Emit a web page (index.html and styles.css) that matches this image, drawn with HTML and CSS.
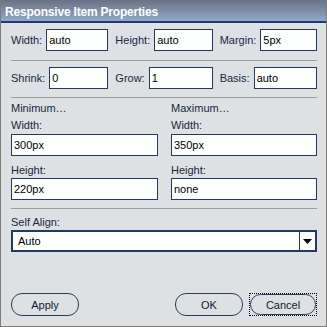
FILE: index.html
```html
<!DOCTYPE html>
<html lang="en">
<head>
    <meta charset="UTF-8">
    <title>Responsive Item Properties</title>
    <link rel="stylesheet" href="styles.css">
</head>
<body>
    <div class="dialog">
        <div class="dialog-title">Responsive Item Properties</div>

        <div class="dialog-body">
            <div class="field-row">
                <label class="field">Width: <input type="text" class="text-input" value="auto"></label>
                <label class="field">Height: <input type="text" class="text-input" value="auto"></label>
                <label class="field">Margin: <input type="text" class="text-input" value="5px"></label>
            </div>

            <div class="separator sep-box"></div>

            <div class="field-row">
                <label class="field">Shrink: <input type="text" class="text-input" value="0"></label>
                <label class="field">Grow: <input type="text" class="text-input" value="1"></label>
                <label class="field">Basis: <input type="text" class="text-input" value="auto"></label>
            </div>

            <div class="separator sep-flex"></div>

            <div class="limits">
                <div class="limit-col">
                    <div class="limit-heading">Minimum…</div>
                    <div class="stack-label">Width:</div>
                    <input type="text" class="text-input wide" value="300px">
                    <div class="stack-label second">Height:</div>
                    <input type="text" class="text-input wide tight" value="220px">
                </div>
                <div class="limit-col">
                    <div class="limit-heading">Maximum…</div>
                    <div class="stack-label">Width:</div>
                    <input type="text" class="text-input wide" value="350px">
                    <div class="stack-label second">Height:</div>
                    <input type="text" class="text-input wide tight" value="none">
                </div>
            </div>

            <div class="separator sep-limits"></div>

            <div class="stack-label align-label">Self Align:</div>
            <div class="select-box">
                <span class="select-value">Auto</span>
                <span class="select-arrow">
                    <svg width="9" height="5" viewBox="0 0 9 5"><polygon points="0,0 9,0 4.5,5" fill="#000"/></svg>
                </span>
            </div>

            <div class="button-bar">
                <button class="btn">Apply</button>
                <div class="button-group">
                    <button class="btn">OK</button>
                    <span class="focus-ring"><button class="btn inner">Cancel</button></span>
                </div>
            </div>
        </div>
    </div>
</body>
</html>
```

FILE: styles.css
```css
* {
    margin: 0;
    padding: 0;
    box-sizing: border-box;
    font-family: 'Liberation Sans', Arial, sans-serif;
}

body {
    background-color: #dde1e4;
}

.dialog {
    width: 327px;
    height: 327px;
    border: 1px solid #7c7c7c;
    border-top: none;
    background-color: #dde1e4;
    display: flex;
    flex-direction: column;
}

.dialog-title {
    height: 23px;
    padding: 5px 0 0 4px;
    background: linear-gradient(to bottom, #6a7282, #8faaca);
    border-bottom: 2px solid #1d3a6a;
    color: #fff;
    font-size: 12px;
    font-weight: bold;
    line-height: 14px;
    letter-spacing: -0.2px;
}

.dialog-body {
    flex: 1;
    display: flex;
    flex-direction: column;
    padding: 6px 9px 10px 10px;
    color: #1a2540;
    font-size: 11px;
}

.field-row {
    display: flex;
    gap: 7px;
}

.field {
    flex: 1;
    min-width: 0;
    display: flex;
    align-items: center;
    gap: 4px;
    white-space: nowrap;
}

.text-input {
    height: 22px;
    width: 0;
    min-width: 0;
    flex: 1;
    border: 1px solid #23395f;
    background-color: #fdfffd;
    padding: 0 2px;
    font-size: 11px;
    color: #000;
    outline: none;
}

.text-input.wide {
    display: block;
    width: 100%;
    margin-top: 2px;
}

.text-input.wide.tight {
    margin-top: 1px;
}

.separator {
    height: 1px;
    background-color: #9a9c9e;
}

.sep-box {
    margin: 9px 0 6px;
}

.sep-flex {
    margin-top: 8px;
}

.sep-limits {
    margin-top: 8px;
}

.limits {
    display: grid;
    grid-template-columns: 147px 146px;
    column-gap: 13px;
}

.limit-heading,
.stack-label {
    line-height: 13px;
}

.limit-heading {
    margin-top: 4px;
}

.stack-label {
    margin-top: 4px;
}

.stack-label.second {
    margin-top: 8px;
}

.stack-label.align-label {
    margin-top: 7px;
}

.select-box {
    margin-top: 1px;
    height: 22px;
    display: flex;
    border: 2px solid #23395f;
    background-color: #fdfffd;
}

.select-value {
    flex: 1;
    padding-left: 5px;
    line-height: 18px;
    color: #000;
}

.select-arrow {
    width: 16px;
    border-left: 1px solid #23395f;
    display: flex;
    align-items: center;
    justify-content: center;
}

.button-bar {
    margin-top: auto;
    display: flex;
    justify-content: space-between;
}

.button-group {
    display: flex;
    gap: 6px;
}

.btn {
    width: 68px;
    height: 23px;
    border: 1px solid #2b3d5e;
    border-radius: 11px;
    background-color: #dde1e4;
    color: #0d1a33;
    font-size: 11px;
}

.focus-ring {
    display: block;
    border: 1px dotted #000;
}

.btn.inner {
    display: block;
    width: 66px;
    height: 21px;
}
```
